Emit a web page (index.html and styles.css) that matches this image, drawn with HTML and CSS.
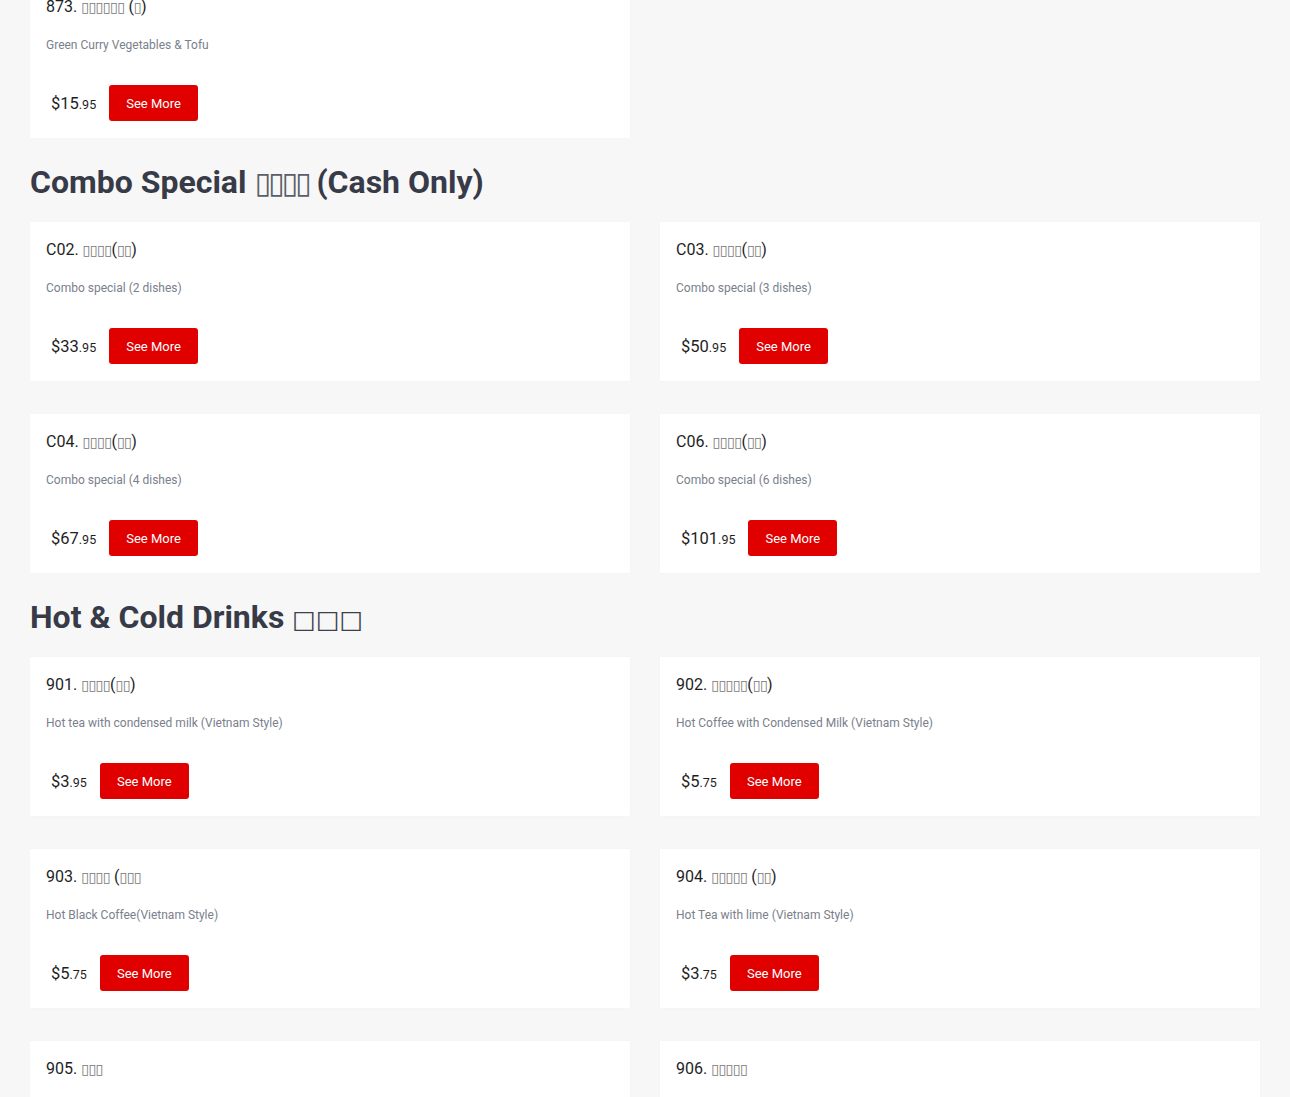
FILE: index.html
```html
<!DOCTYPE html>
<html lang="zh">
<head>
<meta charset="utf-8">
<title>Menu</title>
<link rel="stylesheet" href="styles.css">
</head>
<body>
<main class="menu">
  <section class="section section-first">
    <div class="grid">
      <article class="card">
        <h3 class="title">873. <span class="cj">▯▯▯▯▯▯</span> (<span class="cj">▯</span>)</h3>
        <p class="desc">Green Curry Vegetables &amp; Tofu</p>
        <div class="buy"><span class="price">$15<small>.95</small></span><button class="more">See More</button></div>
      </article>
    </div>
  </section>

  <section class="section">
    <h2 class="heading">Combo Special <span class="cjh-hex">▯▯▯▯</span> (Cash Only)</h2>
    <div class="grid">
      <article class="card">
        <h3 class="title">C02. <span class="cj">▯▯▯▯</span>(<span class="cj">▯▯</span>)</h3>
        <p class="desc">Combo special (2 dishes)</p>
        <div class="buy"><span class="price">$33<small>.95</small></span><button class="more">See More</button></div>
      </article>
      <article class="card">
        <h3 class="title">C03. <span class="cj">▯▯▯▯</span>(<span class="cj">▯▯</span>)</h3>
        <p class="desc">Combo special (3 dishes)</p>
        <div class="buy"><span class="price">$50<small>.95</small></span><button class="more">See More</button></div>
      </article>
      <article class="card">
        <h3 class="title">C04. <span class="cj">▯▯▯▯</span>(<span class="cj">▯▯</span>)</h3>
        <p class="desc">Combo special (4 dishes)</p>
        <div class="buy"><span class="price">$67<small>.95</small></span><button class="more">See More</button></div>
      </article>
      <article class="card">
        <h3 class="title">C06. <span class="cj">▯▯▯▯</span>(<span class="cj">▯▯</span>)</h3>
        <p class="desc">Combo special (6 dishes)</p>
        <div class="buy"><span class="price">$101<small>.95</small></span><button class="more">See More</button></div>
      </article>
    </div>
  </section>

  <section class="section">
    <h2 class="heading">Hot &amp; Cold Drinks <span class="cjh">□□□</span></h2>
    <div class="grid">
      <article class="card">
        <h3 class="title">901. <span class="cj">▯▯▯▯</span>(<span class="cj">▯▯</span>)</h3>
        <p class="desc">Hot tea with condensed milk (Vietnam Style)</p>
        <div class="buy"><span class="price">$3<small>.95</small></span><button class="more">See More</button></div>
      </article>
      <article class="card">
        <h3 class="title">902. <span class="cj">▯▯▯▯▯</span>(<span class="cj">▯▯</span>)</h3>
        <p class="desc">Hot Coffee with Condensed Milk (Vietnam Style)</p>
        <div class="buy"><span class="price">$5<small>.75</small></span><button class="more">See More</button></div>
      </article>
      <article class="card">
        <h3 class="title">903. <span class="cj">▯▯▯▯</span> (<span class="cj">▯▯▯</span></h3>
        <p class="desc">Hot Black Coffee(Vietnam Style)</p>
        <div class="buy"><span class="price">$5<small>.75</small></span><button class="more">See More</button></div>
      </article>
      <article class="card">
        <h3 class="title">904. <span class="cj">▯▯▯▯▯</span> (<span class="cj">▯▯</span>)</h3>
        <p class="desc">Hot Tea with lime (Vietnam Style)</p>
        <div class="buy"><span class="price">$3<small>.75</small></span><button class="more">See More</button></div>
      </article>
      <article class="card">
        <h3 class="title">905. <span class="cj">▯▯▯</span></h3>
        <p class="desc">Iced Coffee</p>
        <div class="buy"><span class="price">$5<small>.75</small></span><button class="more">See More</button></div>
      </article>
      <article class="card">
        <h3 class="title">906. <span class="cj">▯▯▯▯▯</span></h3>
        <p class="desc">Iced Coffee with Condensed Milk</p>
        <div class="buy"><span class="price">$5<small>.95</small></span><button class="more">See More</button></div>
      </article>
    </div>
  </section>
</main>
</body>
</html>
```

FILE: styles.css
```css
html, body {
  margin: 0;
  padding: 0;
}
body {
  background: #f7f7f7;
  font-family: Roboto, "Liberation Sans", sans-serif;
  color: #222;
}
.menu {
  padding: 0 30px 40px;
}
.section-first {
  margin-top: -21px;
}
.heading {
  margin: 24px 0 20px;
  font-family: Roboto, "Liberation Sans", sans-serif;
  font-size: 32px;
  line-height: 40px;
  font-weight: 700;
  color: #373b47;
}
.cjh {
  font-family: "DejaVu Sans", sans-serif;
  font-weight: 400;
  font-size: 25px;
  line-height: 0;
  color: #3c404b;
}
.cjh-hex {
  font-family: "DejaVu Sans", sans-serif;
  font-weight: 400;
  font-size: 30px;
  line-height: 0;
  letter-spacing: -3px;
  color: #5a5e68;
}
.grid {
  display: grid;
  grid-template-columns: 1fr 1fr;
  column-gap: 30px;
  row-gap: 33px;
}
.card {
  background: #fff;
  height: 159px;
  box-sizing: border-box;
  padding: 17px 16px 17px;
  display: flex;
  flex-direction: column;
  box-shadow: 0 0 2px rgba(0, 0, 0, 0.03);
}
.title {
  margin: 0;
  font-size: 16px;
  line-height: 22px;
  font-weight: 400;
  color: #1e1e1e;
}
.cj {
  font-family: "DejaVu Sans", sans-serif;
  font-size: 14px;
  line-height: 0;
  letter-spacing: -0.5px;
  color: #777;
}
.desc {
  margin: 18px 0 0;
  font-size: 12px;
  line-height: 18px;
  color: #7a808c;
}
.buy {
  margin-top: 31px;
  display: flex;
  align-items: center;
}
.price {
  padding-left: 5px;
  margin-right: 13px;
  font-size: 16.5px;
  color: #1e1e1e;
}
.price small {
  font-size: 12.5px;
}
.more {
  height: 36px;
  padding: 0 17px;
  border: 0;
  border-radius: 3px;
  background: #e00000;
  color: #fff;
  font-family: Roboto, "Liberation Sans", sans-serif;
  font-size: 13px;
  cursor: pointer;
}
```
